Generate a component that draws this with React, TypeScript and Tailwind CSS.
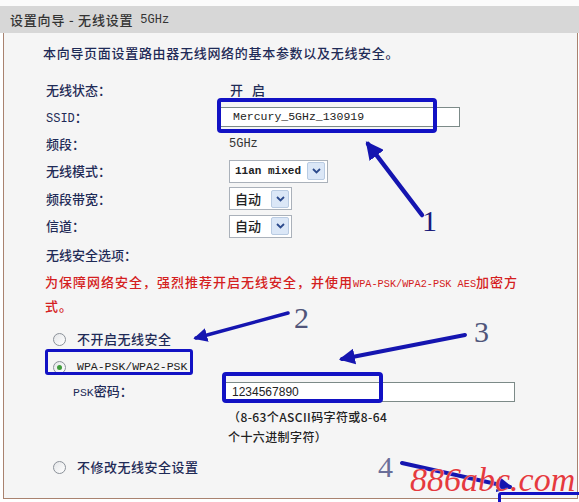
import React from 'react';

const cjk = "font-['Noto_Sans_CJK_SC','Noto_Sans',sans-serif]";
const mono = "font-['Liberation_Mono','DejaVu_Sans_Mono',monospace]";

function Row({ label, h, children }: { label: React.ReactNode; h: string; children?: React.ReactNode }) {
  return (
    <div className={`flex items-center ${h}`}>
      <div className="w-[183px] shrink-0">{label}</div>
      {children}
    </div>
  );
}

function Select({ value, width, isMono }: { value: string; width: string; isMono?: boolean }) {
  return (
    <div className={`flex items-center justify-between h-[23px] ${width} bg-white border border-[#aab1ba] pl-[5px] pr-[2px]`}>
      <span className={isMono ? `${mono} text-[11px] font-bold text-[#222]` : 'text-[13px] text-[#222]'}>{value}</span>
      <span className="flex items-center justify-center w-[18px] h-[18px] bg-[#dbe7f7] border border-[#b9cbe2] rounded-[2px]">
        <svg width="9" height="6" viewBox="0 0 9 6">
          <path d="M1 1 L4.5 4.5 L8 1" fill="none" stroke="#2c4a8c" strokeWidth="1.8" />
        </svg>
      </span>
    </div>
  );
}

function Radio({ checked }: { checked?: boolean }) {
  return (
    <span className="flex items-center justify-center w-[13px] h-[13px] rounded-full border border-[#8b9199] bg-gradient-to-br from-[#e4e6e8] to-white">
      {checked && <span className="w-[5px] h-[5px] rounded-full bg-[#3f9b3a]" />}
    </span>
  );
}

export default function App() {
  return (
    <div className={`relative w-[579px] h-[502px] bg-white overflow-hidden ${cjk} font-medium text-[13px] text-[#1f2b57]`}>
      <div className="h-[6px] bg-[#fbfbfb]" />
      <div className="h-[27px] bg-[#d7d7d7] flex items-center pl-[10px] text-[13px] text-[#333] gap-[7px]">
        <span className="tracking-[0.8px]">设置向导 - 无线设置</span>
        <span className={`${mono} text-[12px] font-normal`}>5GHz</span>
      </div>

      <div className="ml-[3px] mr-[1px] h-[466px] border-x border-b border-[#a9826f] bg-[#f5f5f5] pl-[39px] pt-[11px]">
        <div className="leading-[18px] tracking-[0.7px]">本向导页面设置路由器无线网络的基本参数以及无线安全。</div>

        <div className="pl-[3px] mt-[14px]">
          <Row label="无线状态：" h="h-[27px]">
            <span className="pl-[1px] tracking-[3px]">开 启</span>
          </Row>
          <Row label={<><span className={`${mono} font-normal text-[12px]`}>SSID</span>：</>} h="h-[28px]">
            <div className={`ml-[-9px] w-[240px] h-[20px] bg-white border border-[#7c8a88] flex items-center pl-[12px] ${mono} font-normal text-[11.5px] text-[#222]`}>
              Mercury_5GHz_130919
            </div>
          </Row>
          <Row label="频段：" h="h-[26px]">
            <span className={`${mono} font-normal text-[12px] text-[#333]`}>5GHz</span>
          </Row>
          <Row label="无线模式：" h="h-[28px]">
            <Select value="11an mixed" width="w-[99px]" isMono />
          </Row>
          <Row label="频段带宽：" h="h-[27px]">
            <Select value="自动" width="w-[63px]" />
          </Row>
          <Row label="信道：" h="h-[28px]">
            <Select value="自动" width="w-[63px]" />
          </Row>
          <div className="h-[30px] flex items-center">无线安全选项：</div>

          <div className="mt-[1px] ml-[-1px] leading-[21px] text-[#d42020] tracking-[1px]">
            为保障网络安全，强烈推荐开启无线安全，并使用
            <span className={`${mono} font-normal text-[10.25px] tracking-[0px]`}>WPA-PSK/WPA2-PSK AES</span>
            加密方
            <br />
            式。
          </div>

          <div className="mt-[9px] h-[28px] flex items-center pl-[7px] gap-[11px]">
            <Radio />
            <span className="tracking-[0.5px]">不开启无线安全</span>
          </div>
          <div className="h-[28px] flex items-center pl-[7px] gap-[11px]">
            <Radio checked />
            <span className={`${mono} font-normal text-[11.5px] text-[#222]`}>WPA-PSK/WPA2-PSK</span>
          </div>
          <div className="h-[21px] flex items-center pl-[27px]">
            <span className="w-[152px] shrink-0">
              <span className={`${mono} font-normal text-[11.5px]`}>PSK</span>密码：
            </span>
            <div className="w-[290px] h-[20px] bg-white border border-[#7c8a88] flex items-center pl-[6px] font-['Liberation_Sans',sans-serif] font-normal text-[12px] text-[#222]">
              1234567890
            </div>
          </div>
          <div className="mt-[5px] pl-[182px] leading-[20px] text-[12px] text-[#222] tracking-[0.4px]">
            <div>（8-63个ASCII码字符或8-64</div>
            <div>个十六进制字符）</div>
          </div>
          <div className="mt-[10px] h-[20px] flex items-center pl-[7px] gap-[11px]">
            <Radio />
            <span className="tracking-[0.5px]">不修改无线安全设置</span>
          </div>
        </div>
      </div>

      {/* annotation boxes */}
      <div className="absolute left-[217px] top-[98px] w-[220px] h-[35px] border-4 border-[#1212c4] rounded-[4px]" />
      <div className="absolute left-[45px] top-[349px] w-[148px] h-[26px] border-[3px] border-[#1212c4] rounded-[3px]" />
      <div className="absolute left-[222px] top-[372px] w-[161px] h-[31px] border-4 border-[#1212c4] rounded-[4px]" />
      <div className="absolute left-[498px] top-[492px] w-[90px] h-[20px] border-[3px] border-[#1212c4] rounded-[3px]" />

      {/* annotation arrows */}
      <svg className="absolute left-0 top-0 pointer-events-none" width="579" height="502">
        <defs>
          <marker id="ah" viewBox="0 0 10 10" refX="8" refY="5" markerWidth="4" markerHeight="4" orient="auto">
            <path d="M0 0 L10 5 L0 10 z" fill="#1515b0" />
          </marker>
        </defs>
        <line x1="422" y1="215" x2="368" y2="144" stroke="#1515b0" strokeWidth="4.5" strokeLinecap="round" markerEnd="url(#ah)" />
        <line x1="288" y1="313" x2="196" y2="338" stroke="#1515b0" strokeWidth="3.5" strokeLinecap="round" markerEnd="url(#ah)" />
        <line x1="465" y1="335" x2="342" y2="359" stroke="#1515b0" strokeWidth="4" strokeLinecap="round" markerEnd="url(#ah)" />
        <line x1="402" y1="463" x2="510" y2="487" stroke="#1515b0" strokeWidth="4" strokeLinecap="round" markerEnd="url(#ah)" />
      </svg>

      <span className="absolute left-[422px] top-[206px] font-['Liberation_Serif',serif] font-normal text-[30px] leading-none text-[#1a1a7a]">1</span>
      <span className="absolute left-[294px] top-[303px] font-['Liberation_Serif',serif] font-normal text-[30px] leading-none text-[#50557a]">2</span>
      <span className="absolute left-[474px] top-[317px] font-['Liberation_Serif',serif] font-normal text-[30px] leading-none text-[#50557a]">3</span>
      <span className="absolute left-[378px] top-[452px] font-['Liberation_Serif',serif] font-normal text-[30px] leading-none text-[#6a6e98]">4</span>

      <span className="absolute left-[410px] top-[463px] font-['Liberation_Serif',serif] font-normal italic text-[34px] leading-none text-[#e53a3f] [text-shadow:0_0_1px_#fff]">
        886abc.com
      </span>
    </div>
  );
}
